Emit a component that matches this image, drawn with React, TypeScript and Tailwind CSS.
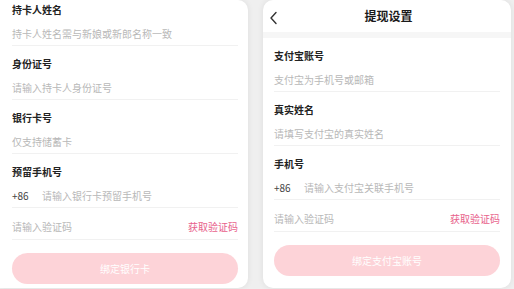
import React from "react";

const font = { fontFamily: '"Noto Sans CJK SC", "Noto Sans", sans-serif' };

function Field({ label, placeholder, first, prefix }: { label: string; placeholder: string; first?: boolean; prefix?: boolean }) {
  return (
    <div className={`${first ? "" : "pt-[8px]"} border-b border-[#f1f1f1]`}>
      <div className="h-[20px] flex items-center text-[10px] font-semibold text-[#222] leading-none">{label}</div>
      <div className="mt-[2px] h-[23px] flex items-center text-[10px] leading-none">
        {prefix && <span className="text-[#444] w-[30px]">+86</span>}
        <span className="text-[#b8b8b8]">{placeholder}</span>
      </div>
    </div>
  );
}

function CodeRow() {
  return (
    <div className="pt-[7px] h-[32px] border-b border-[#f1f1f1]">
      <div className="h-[24px] flex items-center justify-between text-[10px] leading-none">
        <span className="text-[#b8b8b8]">请输入验证码</span>
        <span className="text-[#e8628c]">获取验证码</span>
      </div>
    </div>
  );
}

function Button({ text }: { text: string }) {
  return (
    <div className="mt-[13px] h-[31px] rounded-full bg-[#fdd3d8] flex items-center justify-center text-[10px] text-white leading-none">
      {text}
    </div>
  );
}

export default function App() {
  return (
    <div className="w-[514px] h-[289px] bg-[#efefef] flex overflow-hidden" style={font}>
      <div className="w-[248px] h-[288px] bg-white rounded-r-[10px] shadow-[0_0_6px_rgba(0,0,0,0.08)] pl-[12px] pr-[10px] flex flex-col">
        <Field first label="持卡人姓名" placeholder="持卡人姓名需与新娘或新郎名称一致" />
        <Field label="身份证号" placeholder="请输入持卡人身份证号" />
        <Field label="银行卡号" placeholder="仅支持储蓄卡" />
        <Field label="预留手机号" placeholder="请输入银行卡预留手机号" prefix />
        <CodeRow />
        <Button text="绑定银行卡" />
      </div>
      <div className="ml-[15px] w-[248px] h-[288px] bg-white rounded-[10px] shadow-[0_0_6px_rgba(0,0,0,0.08)] flex flex-col overflow-hidden">
        <div className="h-[32px] relative flex items-center justify-center">
          <svg className="absolute left-[6px] top-[11px]" width="10" height="14" viewBox="0 0 10 14">
            <polyline points="7,1.5 2,7 7,12.5" fill="none" stroke="#333" strokeWidth="1.4" strokeLinecap="round" strokeLinejoin="round" />
          </svg>
          <span className="text-[12px] font-bold text-[#1a1a1a] leading-none ml-[3px]">提现设置</span>
        </div>
        <div className="h-[6px] bg-[#f6f6f6]" />
        <div className="pl-[11px] pr-[11px] flex flex-col">
          <Field label="支付宝账号" placeholder="支付宝为手机号或邮箱" />
          <Field label="真实姓名" placeholder="请填写支付宝的真实姓名" />
          <Field label="手机号" placeholder="请输入支付宝关联手机号" prefix />
          <CodeRow />
          <Button text="绑定支付宝账号" />
        </div>
      </div>
    </div>
  );
}
